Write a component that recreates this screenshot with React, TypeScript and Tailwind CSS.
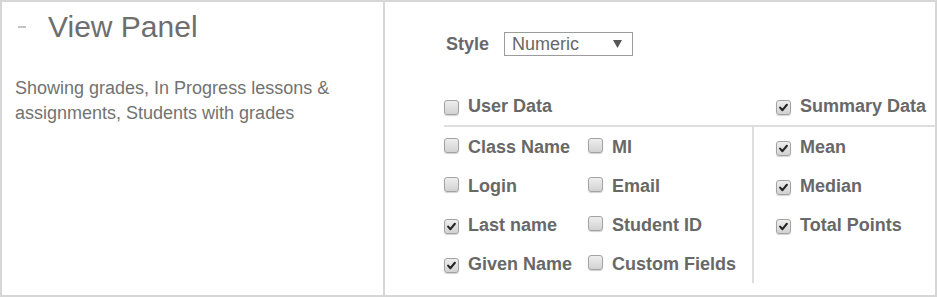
import { ReactNode } from 'react';

interface CheckProps {
  checked?: boolean;
  label: string;
  offset?: 'even' | 'low';
}

const CheckMark = () => (
  <svg aria-hidden="true" viewBox="0 0 15 15" className="h-[15px] w-[15px]">
    <path d="M3.6 7.6 6.3 10.6 11.4 4.3" fill="none" stroke="#262626" strokeWidth="2.4" strokeLinecap="round" strokeLinejoin="round" />
  </svg>
);

const Check = ({ checked = false, label, offset = 'even' }: CheckProps) => (
  <label className="flex items-start gap-[9px] leading-[20px]">
    <span
      className={`flex h-[15px] w-[15px] shrink-0 items-center justify-center rounded-[3px] border border-[#a3a3a3] bg-gradient-to-b from-[#eeeeee] to-[#d2d2d2] shadow-[0_1px_1px_rgba(0,0,0,0.18)] ${
        offset === 'low' ? 'mt-[4px]' : 'mt-[1px]'
      }`}
    >
      {checked && <CheckMark />}
    </span>
    <span className="text-[18px] font-bold text-[#686868]">{label}</span>
  </label>
);

const Column = ({ children }: { children: ReactNode }) => (
  <div className="flex flex-col gap-[19px]">{children}</div>
);

const App = () => {
  return (
    <div
      className="flex h-[297px] w-[937px] border-2 border-[#d6d6d6] bg-white"
      style={{ fontFamily: '"Liberation Sans", Arial, sans-serif' }}
    >
      <section className="w-[383px] shrink-0 border-r-2 border-[#d6d6d6] pl-[13px] pr-4 pt-[8px]">
        <div className="flex items-center gap-[22px] pl-[3px]">
          <span className="h-[2px] w-[8px] bg-[#c4c4c4]" />
          <h2 className="text-[30px] leading-[34px] font-normal text-[#6e6e6e]">View Panel</h2>
        </div>
        <p className="mt-[32px] text-[18px] leading-[25px] text-[#727272]">
          Showing grades, In Progress lessons &amp; assignments, Students with grades
        </p>
      </section>

      <section className="flex-1 pl-[59px] pt-[30px]">
        <div className="flex items-center gap-[15px] pl-[2px]">
          <span className="text-[18px] leading-[20px] font-bold text-[#686868]">Style</span>
          <div className="flex h-[24px] w-[129px] items-center justify-between border border-[#9c9c9c] pl-[7px] pr-[10px]">
            <span className="text-[18px] leading-[20px] text-[#676767]">Numeric</span>
            <svg aria-hidden="true" viewBox="0 0 9 8" className="h-[8px] w-[9px]">
              <path d="M0 0h9L4.5 8z" fill="#555" />
            </svg>
          </div>
        </div>

        <div className="mt-[40px] grid grid-cols-[308px_1fr]">
          <div className="border-b-2 border-[#dedede] pb-[9px]">
            <Check label="User Data" offset="low" />
          </div>
          <div className="border-b-2 border-[#dedede] pb-[9px] pl-[24px]">
            <Check label="Summary Data" checked offset="low" />
          </div>

          <div className="grid grid-cols-[144px_1fr] pb-[9px] pt-[10px]">
            <Column>
              <Check label="Class Name" />
              <Check label="Login" />
              <Check label="Last name" checked offset="low" />
              <Check label="Given Name" checked offset="low" />
            </Column>
            <Column>
              <Check label="MI" />
              <Check label="Email" />
              <Check label="Student ID" />
              <Check label="Custom Fields" />
            </Column>
          </div>
          <div className="border-l-2 border-[#dedede] pb-[9px] pl-[22px] pt-[10px]">
            <Column>
              <Check label="Mean" checked offset="low" />
              <Check label="Median" checked offset="low" />
              <Check label="Total Points" checked offset="low" />
            </Column>
          </div>
        </div>
      </section>
    </div>
  );
};

export default App;
